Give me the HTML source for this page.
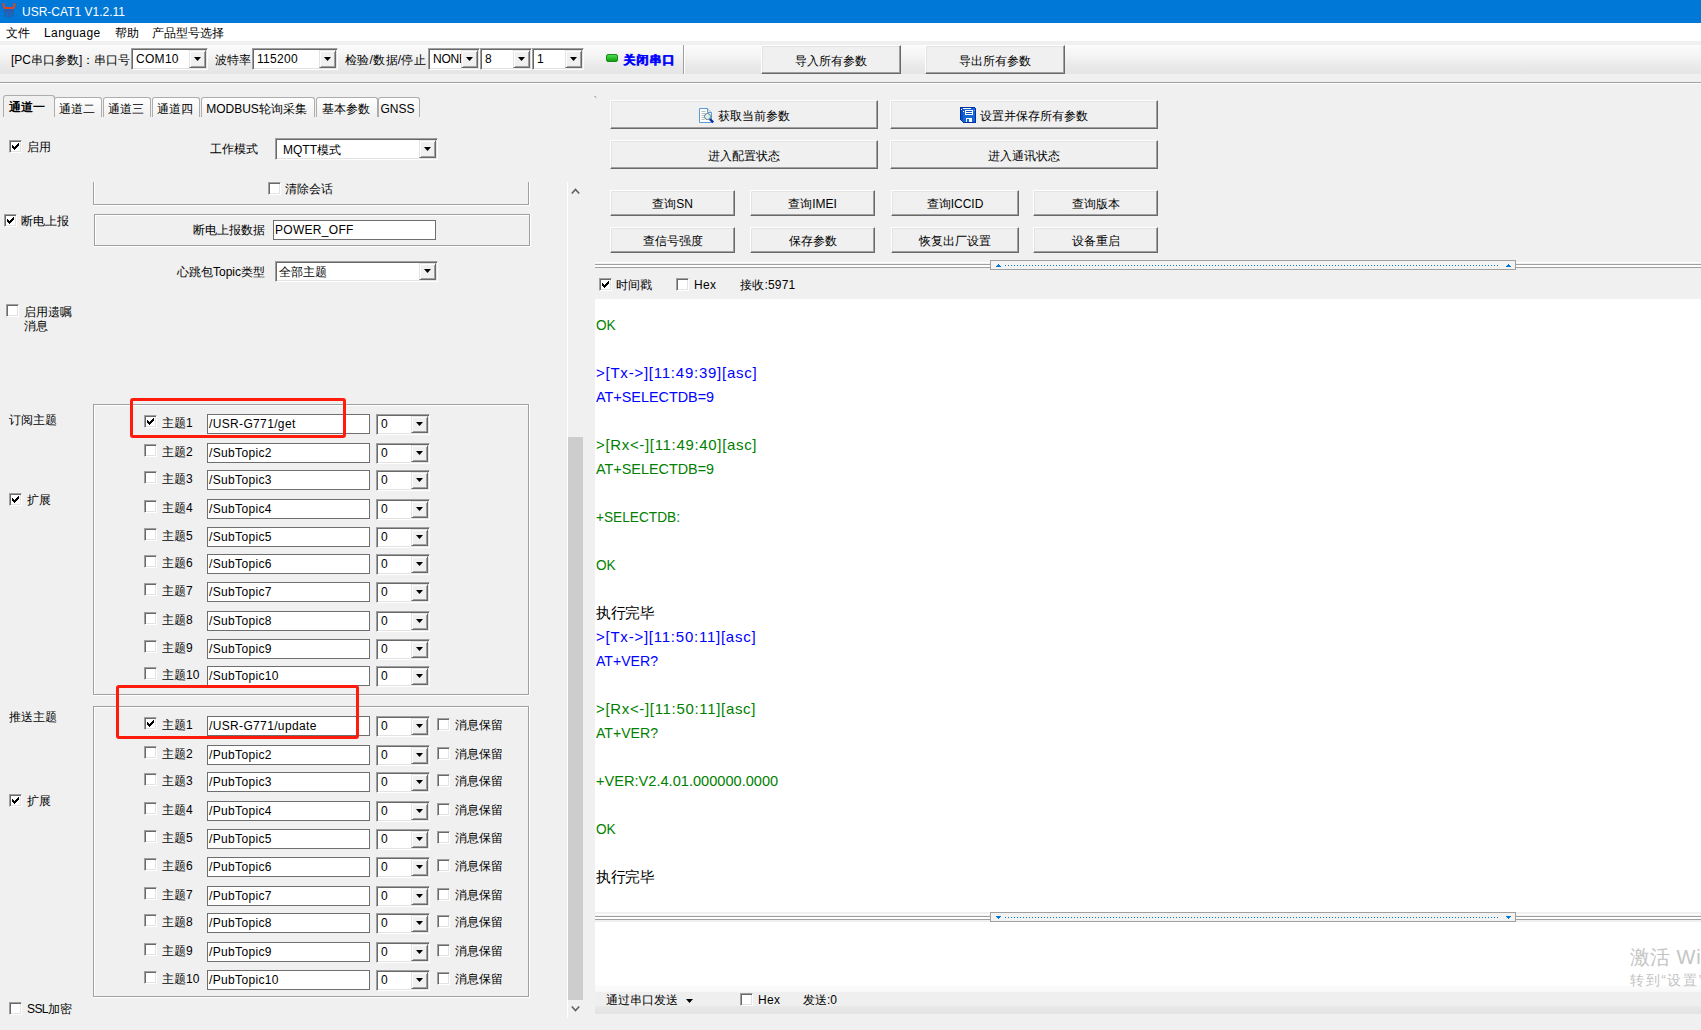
<!DOCTYPE html><html><head><meta charset="utf-8"><style>
html,body{margin:0;padding:0;width:1701px;height:1030px;overflow:hidden;background:#F0F0F0;}
body{position:relative;font-family:"Liberation Sans",sans-serif;font-size:12px;color:#000;}
.a,.t,.cb,.btn,.combo,.edit,.grp{position:absolute;box-sizing:border-box;}
.t{white-space:nowrap;}
.cb{width:13px;height:13px;background:#fff;border:1px solid;border-color:#A0A0A0 #fff #fff #A0A0A0;box-shadow:inset 1px 1px 0 #696969, inset -1px -1px 0 #E3E3E3;}
.ck{position:absolute;left:-1px;top:-1px;}
.btn{background:#F0F0F0;border:1px solid;border-color:#fff #696969 #696969 #fff;box-shadow:inset -1px -1px 0 #A0A0A0, inset 1px 1px 0 #E3E3E3;text-align:center;white-space:nowrap;}
.combo{background:#fff;border:1px solid;border-color:#A0A0A0 #fff #fff #A0A0A0;box-shadow:inset 1px 1px 0 #696969, inset -1px -1px 0 #E3E3E3;overflow:hidden;}
.combo .ct,.edit .ct{position:absolute;white-space:nowrap;}
.dd{position:absolute;right:1px;top:1px;width:17px;box-sizing:border-box;background:#F0F0F0;border:1px solid;border-color:#E3E3E3 #696969 #696969 #E3E3E3;box-shadow:inset 1px 1px 0 #fff, inset -1px -1px 0 #A0A0A0;}
.edit{background:#fff;border:1px solid #6E6E6E;overflow:hidden;}
.tab{position:absolute;box-sizing:border-box;border:1px solid #ADADAD;border-bottom:none;border-radius:3px 3px 0 0;background:linear-gradient(#FFFFFF,#F0F0F0);text-align:center;white-space:nowrap;padding-right:3px;}
.grp{border:1px solid #A0A0A0;}
</style></head><body>

<div class="a" style="left:0px;top:0px;width:1701px;height:23px;background:#0078D7"></div>
<svg class="a" style="left:0px;top:0px" width="20" height="20"><path d="M3.6 4 Q3.8 8 5 8 H13 Q14.2 8 14.4 4" stroke="#D9452A" stroke-width="2.2" fill="none" stroke-linecap="round"/><path d="M3.5 9.2 H14.5 L13.8 12.5 H4.2 Z" fill="#2E5BA8" opacity="0.9"/><rect x="4.6" y="11" width="2.2" height="6.5" rx="1" fill="#2E5BA8" opacity="0.9"/><rect x="8" y="11" width="2.2" height="6.3" rx="1" fill="#2E5BA8" opacity="0.9"/><rect x="11.3" y="11" width="2.2" height="6.5" rx="1" fill="#2E5BA8" opacity="0.9"/></svg>
<div class="t" style="left:22px;top:4.0px;line-height:16px;font-size:12px;color:#fff;">USR-CAT1 V1.2.11</div>
<div class="a" style="left:0px;top:23px;width:1701px;height:18px;background:#fff"></div>
<div class="t" style="left:6px;top:25.0px;line-height:16px;font-size:12px;color:#000;">文件</div>
<div class="t" style="left:44px;top:25.0px;line-height:16px;font-size:12px;color:#000;letter-spacing:0.4px;">Language</div>
<div class="t" style="left:115px;top:25.0px;line-height:16px;font-size:12px;color:#000;">帮助</div>
<div class="t" style="left:152px;top:25.0px;line-height:16px;font-size:12px;color:#000;">产品型号选择</div>
<div class="a" style="left:0px;top:41px;width:1701px;height:4px;background:#F0F0F0"></div>
<div class="a" style="left:0px;top:45px;width:1701px;height:29px;background:linear-gradient(#FBFBFB,#F6F6F6 30%,#E9E9E9 75%,#E5E5E5)"></div>
<div class="a" style="left:0px;top:74px;width:1701px;height:8px;background:#F0F0F0"></div>
<div class="a" style="left:0px;top:82px;width:1701px;height:1px;background:#A0A0A0"></div>
<div class="a" style="left:0px;top:83px;width:1701px;height:1px;background:#FFFFFF"></div>
<div class="t" style="left:11px;top:52.0px;line-height:16px;font-size:12px;color:#000;">[PC串口参数]：串口号</div>
<div class="combo" style="left:131px;top:48px;width:77px;height:22px"><div class="ct" style="left:4px;top:1px;line-height:18px;letter-spacing:0.3px;">COM10</div><div class="dd" style="height:18px"><svg width="7" height="4" style="position:absolute;left:4px;top:6px"><path d="M0 0h7l-3.5 4z" fill="#000"/></svg></div></div>
<div class="t" style="left:215px;top:52.0px;line-height:16px;font-size:12px;color:#000;">波特率</div>
<div class="combo" style="left:252px;top:48px;width:86px;height:22px"><div class="ct" style="left:4px;top:1px;line-height:18px;letter-spacing:0.3px;">115200</div><div class="dd" style="height:18px"><svg width="7" height="4" style="position:absolute;left:4px;top:6px"><path d="M0 0h7l-3.5 4z" fill="#000"/></svg></div></div>
<div class="t" style="left:345px;top:52.0px;line-height:16px;font-size:12px;color:#000;letter-spacing:0.3px;">检验/数据/停止</div>
<div class="combo" style="left:428px;top:48px;width:52px;height:22px"><div class="ct" style="left:4px;top:1px;line-height:18px;letter-spacing:-0.2px;">NONE</div><div class="dd" style="height:18px"><svg width="7" height="4" style="position:absolute;left:4px;top:6px"><path d="M0 0h7l-3.5 4z" fill="#000"/></svg></div></div>
<div class="combo" style="left:480px;top:48px;width:52px;height:22px"><div class="ct" style="left:4px;top:1px;line-height:18px;">8</div><div class="dd" style="height:18px"><svg width="7" height="4" style="position:absolute;left:4px;top:6px"><path d="M0 0h7l-3.5 4z" fill="#000"/></svg></div></div>
<div class="combo" style="left:532px;top:48px;width:52px;height:22px"><div class="ct" style="left:4px;top:1px;line-height:18px;">1</div><div class="dd" style="height:18px"><svg width="7" height="4" style="position:absolute;left:4px;top:6px"><path d="M0 0h7l-3.5 4z" fill="#000"/></svg></div></div>
<div class="a" style="left:606px;top:54px;width:12px;height:8px;background:linear-gradient(#4CDB4C,#10A010);border-radius:2px;border:1px solid #1A8A1A;box-sizing:border-box"></div>
<div class="t" style="left:623px;top:52.0px;line-height:16px;font-size:12px;color:#0000FF;font-weight:bold;letter-spacing:1.1px;text-shadow:0.5px 0 0 #0000FF;">关闭串口</div>
<div class="a" style="left:683px;top:45px;width:1px;height:29px;background:#A0A0A0"></div>
<div class="a" style="left:684px;top:45px;width:1px;height:29px;background:#fff"></div>
<div class="btn" style="left:761px;top:45px;width:140px;height:29px;line-height:27px;padding-top:2px">导入所有参数</div>
<div class="btn" style="left:925px;top:45px;width:140px;height:29px;line-height:27px;padding-top:2px">导出所有参数</div>
<div class="tab" style="left:54px;top:97px;width:48px;height:20px;line-height:22px">通道二</div>
<div class="tab" style="left:103px;top:97px;width:48px;height:20px;line-height:22px">通道三</div>
<div class="tab" style="left:152px;top:97px;width:48px;height:20px;line-height:22px">通道四</div>
<div class="tab" style="left:201px;top:97px;width:114px;height:20px;line-height:22px">MODBUS轮询采集</div>
<div class="tab" style="left:316px;top:97px;width:62px;height:20px;line-height:22px">基本参数</div>
<div class="tab" style="left:378px;top:97px;width:42px;height:20px;line-height:22px">GNSS</div>
<div class="tab" style="left:3px;top:95px;width:52px;height:22px;line-height:23px;background:#F0F0F0;font-weight:bold;text-indent:-2px">通道一</div>
<div class="cb" style="left:9px;top:140px"><svg width="13" height="13" class="ck"><path d="M3 5h1v3h-1zM4 6h1v3h-1zM5 7h1v3h-1zM6 6h1v3h-1zM7 5h1v3h-1zM8 4h1v3h-1zM9 3h1v3h-1z" fill="#000"/></svg></div>
<div class="t" style="left:27px;top:139.0px;line-height:16px;font-size:12px;color:#000;">启用</div>
<div class="t" style="left:210px;top:141.0px;line-height:16px;font-size:12px;color:#000;">工作模式</div>
<div class="combo" style="left:275px;top:138px;width:163px;height:22px"><div class="ct" style="left:7px;top:2px;line-height:18px;">MQTT模式</div><div class="dd" style="height:18px"><svg width="7" height="4" style="position:absolute;left:4px;top:6px"><path d="M0 0h7l-3.5 4z" fill="#000"/></svg></div></div>
<div class="grp" style="left:93px;top:182px;width:436px;height:23px;border-top:none;"></div>
<div class="a" style="left:94px;top:182px;width:1px;height:22px;background:#fff"></div>
<div class="a" style="left:93px;top:205px;width:437px;height:1px;background:#fff"></div>
<div class="a" style="left:529px;top:182px;width:1px;height:24px;background:#fff"></div>
<div class="cb" style="left:268px;top:182px"></div>
<div class="t" style="left:285px;top:181.0px;line-height:16px;font-size:12px;color:#000;">清除会话</div>
<div class="cb" style="left:4px;top:214px"><svg width="13" height="13" class="ck"><path d="M3 5h1v3h-1zM4 6h1v3h-1zM5 7h1v3h-1zM6 6h1v3h-1zM7 5h1v3h-1zM8 4h1v3h-1zM9 3h1v3h-1z" fill="#000"/></svg></div>
<div class="t" style="left:21px;top:213.0px;line-height:16px;font-size:12px;color:#000;">断电上报</div>
<div class="grp" style="left:94px;top:214px;width:436px;height:32px;"></div>
<div class="a" style="left:95px;top:215px;width:434px;height:1px;background:#fff"></div>
<div class="a" style="left:95px;top:215px;width:1px;height:30px;background:#fff"></div>
<div class="a" style="left:94px;top:246px;width:437px;height:1px;background:#fff"></div>
<div class="a" style="left:530px;top:214px;width:1px;height:33px;background:#fff"></div>
<div class="t" style="left:193px;top:222.0px;line-height:16px;font-size:12px;color:#000;">断电上报数据</div>
<div class="edit" style="left:273px;top:220px;width:163px;height:20px"><div class="ct" style="left:1px;top:0px;line-height:18px;letter-spacing:0.3px;">POWER_OFF</div></div>
<div class="t" style="left:177px;top:264.0px;line-height:16px;font-size:12px;color:#000;">心跳包Topic类型</div>
<div class="combo" style="left:275px;top:261px;width:163px;height:21px"><div class="ct" style="left:3px;top:2px;line-height:17px;">全部主题</div><div class="dd" style="height:17px"><svg width="7" height="4" style="position:absolute;left:4px;top:5px"><path d="M0 0h7l-3.5 4z" fill="#000"/></svg></div></div>
<div class="cb" style="left:6px;top:304px"></div>
<div class="t" style="left:24px;top:304.0px;line-height:16px;font-size:12px;color:#000;">启用遗嘱</div>
<div class="t" style="left:24px;top:318.0px;line-height:16px;font-size:12px;color:#000;">消息</div>
<div class="t" style="left:9px;top:412.0px;line-height:16px;font-size:12px;color:#000;">订阅主题</div>
<div class="cb" style="left:9px;top:493px"><svg width="13" height="13" class="ck"><path d="M3 5h1v3h-1zM4 6h1v3h-1zM5 7h1v3h-1zM6 6h1v3h-1zM7 5h1v3h-1zM8 4h1v3h-1zM9 3h1v3h-1z" fill="#000"/></svg></div>
<div class="t" style="left:27px;top:492.0px;line-height:16px;font-size:12px;color:#000;">扩展</div>
<div class="t" style="left:9px;top:709.0px;line-height:16px;font-size:12px;color:#000;">推送主题</div>
<div class="cb" style="left:9px;top:794px"><svg width="13" height="13" class="ck"><path d="M3 5h1v3h-1zM4 6h1v3h-1zM5 7h1v3h-1zM6 6h1v3h-1zM7 5h1v3h-1zM8 4h1v3h-1zM9 3h1v3h-1z" fill="#000"/></svg></div>
<div class="t" style="left:27px;top:793.0px;line-height:16px;font-size:12px;color:#000;">扩展</div>
<div class="cb" style="left:9px;top:1002px"></div>
<div class="t" style="left:27px;top:1001.0px;line-height:16px;font-size:12px;color:#000;"><span style="letter-spacing:-0.6px">SSL</span>加密</div>
<div class="grp" style="left:93px;top:404px;width:436px;height:291px;"></div>
<div class="a" style="left:94px;top:405px;width:434px;height:1px;background:#fff"></div>
<div class="a" style="left:94px;top:405px;width:1px;height:289px;background:#fff"></div>
<div class="a" style="left:93px;top:695px;width:437px;height:1px;background:#fff"></div>
<div class="a" style="left:529px;top:404px;width:1px;height:292px;background:#fff"></div>
<div class="grp" style="left:93px;top:706px;width:436px;height:291px;"></div>
<div class="a" style="left:94px;top:707px;width:434px;height:1px;background:#fff"></div>
<div class="a" style="left:94px;top:707px;width:1px;height:289px;background:#fff"></div>
<div class="a" style="left:93px;top:997px;width:437px;height:1px;background:#fff"></div>
<div class="a" style="left:529px;top:706px;width:1px;height:292px;background:#fff"></div>
<div class="cb" style="left:144px;top:415px"><svg width="13" height="13" class="ck"><path d="M3 5h1v3h-1zM4 6h1v3h-1zM5 7h1v3h-1zM6 6h1v3h-1zM7 5h1v3h-1zM8 4h1v3h-1zM9 3h1v3h-1z" fill="#000"/></svg></div>
<div class="t" style="left:162px;top:415.0px;line-height:16px;font-size:12px;color:#000;">主题1</div>
<div class="edit" style="left:207px;top:414px;width:163px;height:20px"><div class="ct" style="left:1px;top:0px;line-height:18px;letter-spacing:0.35px;">/USR-G771/get</div></div>
<div class="combo" style="left:376px;top:414px;width:54px;height:21px"><div class="ct" style="left:4px;top:1px;line-height:17px;">0</div><div class="dd" style="height:17px"><svg width="7" height="4" style="position:absolute;left:4px;top:5px"><path d="M0 0h7l-3.5 4z" fill="#000"/></svg></div></div>
<div class="cb" style="left:144px;top:444px"></div>
<div class="t" style="left:162px;top:444.0px;line-height:16px;font-size:12px;color:#000;">主题2</div>
<div class="edit" style="left:207px;top:443px;width:163px;height:20px"><div class="ct" style="left:1px;top:0px;line-height:18px;letter-spacing:0.35px;">/SubTopic2</div></div>
<div class="combo" style="left:376px;top:443px;width:54px;height:21px"><div class="ct" style="left:4px;top:1px;line-height:17px;">0</div><div class="dd" style="height:17px"><svg width="7" height="4" style="position:absolute;left:4px;top:5px"><path d="M0 0h7l-3.5 4z" fill="#000"/></svg></div></div>
<div class="cb" style="left:144px;top:471px"></div>
<div class="t" style="left:162px;top:471.0px;line-height:16px;font-size:12px;color:#000;">主题3</div>
<div class="edit" style="left:207px;top:470px;width:163px;height:20px"><div class="ct" style="left:1px;top:0px;line-height:18px;letter-spacing:0.35px;">/SubTopic3</div></div>
<div class="combo" style="left:376px;top:470px;width:54px;height:21px"><div class="ct" style="left:4px;top:1px;line-height:17px;">0</div><div class="dd" style="height:17px"><svg width="7" height="4" style="position:absolute;left:4px;top:5px"><path d="M0 0h7l-3.5 4z" fill="#000"/></svg></div></div>
<div class="cb" style="left:144px;top:500px"></div>
<div class="t" style="left:162px;top:500.0px;line-height:16px;font-size:12px;color:#000;">主题4</div>
<div class="edit" style="left:207px;top:499px;width:163px;height:20px"><div class="ct" style="left:1px;top:0px;line-height:18px;letter-spacing:0.35px;">/SubTopic4</div></div>
<div class="combo" style="left:376px;top:499px;width:54px;height:21px"><div class="ct" style="left:4px;top:1px;line-height:17px;">0</div><div class="dd" style="height:17px"><svg width="7" height="4" style="position:absolute;left:4px;top:5px"><path d="M0 0h7l-3.5 4z" fill="#000"/></svg></div></div>
<div class="cb" style="left:144px;top:528px"></div>
<div class="t" style="left:162px;top:528.0px;line-height:16px;font-size:12px;color:#000;">主题5</div>
<div class="edit" style="left:207px;top:527px;width:163px;height:20px"><div class="ct" style="left:1px;top:0px;line-height:18px;letter-spacing:0.35px;">/SubTopic5</div></div>
<div class="combo" style="left:376px;top:527px;width:54px;height:21px"><div class="ct" style="left:4px;top:1px;line-height:17px;">0</div><div class="dd" style="height:17px"><svg width="7" height="4" style="position:absolute;left:4px;top:5px"><path d="M0 0h7l-3.5 4z" fill="#000"/></svg></div></div>
<div class="cb" style="left:144px;top:555px"></div>
<div class="t" style="left:162px;top:555.0px;line-height:16px;font-size:12px;color:#000;">主题6</div>
<div class="edit" style="left:207px;top:554px;width:163px;height:20px"><div class="ct" style="left:1px;top:0px;line-height:18px;letter-spacing:0.35px;">/SubTopic6</div></div>
<div class="combo" style="left:376px;top:554px;width:54px;height:21px"><div class="ct" style="left:4px;top:1px;line-height:17px;">0</div><div class="dd" style="height:17px"><svg width="7" height="4" style="position:absolute;left:4px;top:5px"><path d="M0 0h7l-3.5 4z" fill="#000"/></svg></div></div>
<div class="cb" style="left:144px;top:583px"></div>
<div class="t" style="left:162px;top:583.0px;line-height:16px;font-size:12px;color:#000;">主题7</div>
<div class="edit" style="left:207px;top:582px;width:163px;height:20px"><div class="ct" style="left:1px;top:0px;line-height:18px;letter-spacing:0.35px;">/SubTopic7</div></div>
<div class="combo" style="left:376px;top:582px;width:54px;height:21px"><div class="ct" style="left:4px;top:1px;line-height:17px;">0</div><div class="dd" style="height:17px"><svg width="7" height="4" style="position:absolute;left:4px;top:5px"><path d="M0 0h7l-3.5 4z" fill="#000"/></svg></div></div>
<div class="cb" style="left:144px;top:612px"></div>
<div class="t" style="left:162px;top:612.0px;line-height:16px;font-size:12px;color:#000;">主题8</div>
<div class="edit" style="left:207px;top:611px;width:163px;height:20px"><div class="ct" style="left:1px;top:0px;line-height:18px;letter-spacing:0.35px;">/SubTopic8</div></div>
<div class="combo" style="left:376px;top:611px;width:54px;height:21px"><div class="ct" style="left:4px;top:1px;line-height:17px;">0</div><div class="dd" style="height:17px"><svg width="7" height="4" style="position:absolute;left:4px;top:5px"><path d="M0 0h7l-3.5 4z" fill="#000"/></svg></div></div>
<div class="cb" style="left:144px;top:640px"></div>
<div class="t" style="left:162px;top:640.0px;line-height:16px;font-size:12px;color:#000;">主题9</div>
<div class="edit" style="left:207px;top:639px;width:163px;height:20px"><div class="ct" style="left:1px;top:0px;line-height:18px;letter-spacing:0.35px;">/SubTopic9</div></div>
<div class="combo" style="left:376px;top:639px;width:54px;height:21px"><div class="ct" style="left:4px;top:1px;line-height:17px;">0</div><div class="dd" style="height:17px"><svg width="7" height="4" style="position:absolute;left:4px;top:5px"><path d="M0 0h7l-3.5 4z" fill="#000"/></svg></div></div>
<div class="cb" style="left:144px;top:667px"></div>
<div class="t" style="left:162px;top:667.0px;line-height:16px;font-size:12px;color:#000;">主题10</div>
<div class="edit" style="left:207px;top:666px;width:163px;height:20px"><div class="ct" style="left:1px;top:0px;line-height:18px;letter-spacing:0.35px;">/SubTopic10</div></div>
<div class="combo" style="left:376px;top:666px;width:54px;height:21px"><div class="ct" style="left:4px;top:1px;line-height:17px;">0</div><div class="dd" style="height:17px"><svg width="7" height="4" style="position:absolute;left:4px;top:5px"><path d="M0 0h7l-3.5 4z" fill="#000"/></svg></div></div>
<div class="cb" style="left:144px;top:717px"><svg width="13" height="13" class="ck"><path d="M3 5h1v3h-1zM4 6h1v3h-1zM5 7h1v3h-1zM6 6h1v3h-1zM7 5h1v3h-1zM8 4h1v3h-1zM9 3h1v3h-1z" fill="#000"/></svg></div>
<div class="t" style="left:162px;top:717.0px;line-height:16px;font-size:12px;color:#000;">主题1</div>
<div class="edit" style="left:207px;top:716px;width:163px;height:20px"><div class="ct" style="left:1px;top:0px;line-height:18px;letter-spacing:0.35px;">/USR-G771/update</div></div>
<div class="combo" style="left:376px;top:716px;width:54px;height:21px"><div class="ct" style="left:4px;top:1px;line-height:17px;">0</div><div class="dd" style="height:17px"><svg width="7" height="4" style="position:absolute;left:4px;top:5px"><path d="M0 0h7l-3.5 4z" fill="#000"/></svg></div></div>
<div class="cb" style="left:437px;top:718px"></div>
<div class="t" style="left:455px;top:717.0px;line-height:16px;font-size:12px;color:#000;">消息保留</div>
<div class="cb" style="left:144px;top:746px"></div>
<div class="t" style="left:162px;top:746.0px;line-height:16px;font-size:12px;color:#000;">主题2</div>
<div class="edit" style="left:207px;top:745px;width:163px;height:20px"><div class="ct" style="left:1px;top:0px;line-height:18px;letter-spacing:0.35px;">/PubTopic2</div></div>
<div class="combo" style="left:376px;top:745px;width:54px;height:21px"><div class="ct" style="left:4px;top:1px;line-height:17px;">0</div><div class="dd" style="height:17px"><svg width="7" height="4" style="position:absolute;left:4px;top:5px"><path d="M0 0h7l-3.5 4z" fill="#000"/></svg></div></div>
<div class="cb" style="left:437px;top:747px"></div>
<div class="t" style="left:455px;top:746.0px;line-height:16px;font-size:12px;color:#000;">消息保留</div>
<div class="cb" style="left:144px;top:773px"></div>
<div class="t" style="left:162px;top:773.0px;line-height:16px;font-size:12px;color:#000;">主题3</div>
<div class="edit" style="left:207px;top:772px;width:163px;height:20px"><div class="ct" style="left:1px;top:0px;line-height:18px;letter-spacing:0.35px;">/PubTopic3</div></div>
<div class="combo" style="left:376px;top:772px;width:54px;height:21px"><div class="ct" style="left:4px;top:1px;line-height:17px;">0</div><div class="dd" style="height:17px"><svg width="7" height="4" style="position:absolute;left:4px;top:5px"><path d="M0 0h7l-3.5 4z" fill="#000"/></svg></div></div>
<div class="cb" style="left:437px;top:774px"></div>
<div class="t" style="left:455px;top:773.0px;line-height:16px;font-size:12px;color:#000;">消息保留</div>
<div class="cb" style="left:144px;top:802px"></div>
<div class="t" style="left:162px;top:802.0px;line-height:16px;font-size:12px;color:#000;">主题4</div>
<div class="edit" style="left:207px;top:801px;width:163px;height:20px"><div class="ct" style="left:1px;top:0px;line-height:18px;letter-spacing:0.35px;">/PubTopic4</div></div>
<div class="combo" style="left:376px;top:801px;width:54px;height:21px"><div class="ct" style="left:4px;top:1px;line-height:17px;">0</div><div class="dd" style="height:17px"><svg width="7" height="4" style="position:absolute;left:4px;top:5px"><path d="M0 0h7l-3.5 4z" fill="#000"/></svg></div></div>
<div class="cb" style="left:437px;top:803px"></div>
<div class="t" style="left:455px;top:802.0px;line-height:16px;font-size:12px;color:#000;">消息保留</div>
<div class="cb" style="left:144px;top:830px"></div>
<div class="t" style="left:162px;top:830.0px;line-height:16px;font-size:12px;color:#000;">主题5</div>
<div class="edit" style="left:207px;top:829px;width:163px;height:20px"><div class="ct" style="left:1px;top:0px;line-height:18px;letter-spacing:0.35px;">/PubTopic5</div></div>
<div class="combo" style="left:376px;top:829px;width:54px;height:21px"><div class="ct" style="left:4px;top:1px;line-height:17px;">0</div><div class="dd" style="height:17px"><svg width="7" height="4" style="position:absolute;left:4px;top:5px"><path d="M0 0h7l-3.5 4z" fill="#000"/></svg></div></div>
<div class="cb" style="left:437px;top:831px"></div>
<div class="t" style="left:455px;top:830.0px;line-height:16px;font-size:12px;color:#000;">消息保留</div>
<div class="cb" style="left:144px;top:858px"></div>
<div class="t" style="left:162px;top:858.0px;line-height:16px;font-size:12px;color:#000;">主题6</div>
<div class="edit" style="left:207px;top:857px;width:163px;height:20px"><div class="ct" style="left:1px;top:0px;line-height:18px;letter-spacing:0.35px;">/PubTopic6</div></div>
<div class="combo" style="left:376px;top:857px;width:54px;height:21px"><div class="ct" style="left:4px;top:1px;line-height:17px;">0</div><div class="dd" style="height:17px"><svg width="7" height="4" style="position:absolute;left:4px;top:5px"><path d="M0 0h7l-3.5 4z" fill="#000"/></svg></div></div>
<div class="cb" style="left:437px;top:859px"></div>
<div class="t" style="left:455px;top:858.0px;line-height:16px;font-size:12px;color:#000;">消息保留</div>
<div class="cb" style="left:144px;top:887px"></div>
<div class="t" style="left:162px;top:887.0px;line-height:16px;font-size:12px;color:#000;">主题7</div>
<div class="edit" style="left:207px;top:886px;width:163px;height:20px"><div class="ct" style="left:1px;top:0px;line-height:18px;letter-spacing:0.35px;">/PubTopic7</div></div>
<div class="combo" style="left:376px;top:886px;width:54px;height:21px"><div class="ct" style="left:4px;top:1px;line-height:17px;">0</div><div class="dd" style="height:17px"><svg width="7" height="4" style="position:absolute;left:4px;top:5px"><path d="M0 0h7l-3.5 4z" fill="#000"/></svg></div></div>
<div class="cb" style="left:437px;top:888px"></div>
<div class="t" style="left:455px;top:887.0px;line-height:16px;font-size:12px;color:#000;">消息保留</div>
<div class="cb" style="left:144px;top:914px"></div>
<div class="t" style="left:162px;top:914.0px;line-height:16px;font-size:12px;color:#000;">主题8</div>
<div class="edit" style="left:207px;top:913px;width:163px;height:20px"><div class="ct" style="left:1px;top:0px;line-height:18px;letter-spacing:0.35px;">/PubTopic8</div></div>
<div class="combo" style="left:376px;top:913px;width:54px;height:21px"><div class="ct" style="left:4px;top:1px;line-height:17px;">0</div><div class="dd" style="height:17px"><svg width="7" height="4" style="position:absolute;left:4px;top:5px"><path d="M0 0h7l-3.5 4z" fill="#000"/></svg></div></div>
<div class="cb" style="left:437px;top:915px"></div>
<div class="t" style="left:455px;top:914.0px;line-height:16px;font-size:12px;color:#000;">消息保留</div>
<div class="cb" style="left:144px;top:943px"></div>
<div class="t" style="left:162px;top:943.0px;line-height:16px;font-size:12px;color:#000;">主题9</div>
<div class="edit" style="left:207px;top:942px;width:163px;height:20px"><div class="ct" style="left:1px;top:0px;line-height:18px;letter-spacing:0.35px;">/PubTopic9</div></div>
<div class="combo" style="left:376px;top:942px;width:54px;height:21px"><div class="ct" style="left:4px;top:1px;line-height:17px;">0</div><div class="dd" style="height:17px"><svg width="7" height="4" style="position:absolute;left:4px;top:5px"><path d="M0 0h7l-3.5 4z" fill="#000"/></svg></div></div>
<div class="cb" style="left:437px;top:944px"></div>
<div class="t" style="left:455px;top:943.0px;line-height:16px;font-size:12px;color:#000;">消息保留</div>
<div class="cb" style="left:144px;top:971px"></div>
<div class="t" style="left:162px;top:971.0px;line-height:16px;font-size:12px;color:#000;">主题10</div>
<div class="edit" style="left:207px;top:970px;width:163px;height:20px"><div class="ct" style="left:1px;top:0px;line-height:18px;letter-spacing:0.35px;">/PubTopic10</div></div>
<div class="combo" style="left:376px;top:970px;width:54px;height:21px"><div class="ct" style="left:4px;top:1px;line-height:17px;">0</div><div class="dd" style="height:17px"><svg width="7" height="4" style="position:absolute;left:4px;top:5px"><path d="M0 0h7l-3.5 4z" fill="#000"/></svg></div></div>
<div class="cb" style="left:437px;top:972px"></div>
<div class="t" style="left:455px;top:971.0px;line-height:16px;font-size:12px;color:#000;">消息保留</div>
<div class="a" style="left:130px;top:398px;width:216px;height:40px;border:3px solid #FF1C0C;border-radius:3px"></div>
<div class="a" style="left:116px;top:685px;width:243px;height:54px;border:3px solid #FF1C0C;border-radius:3px"></div>
<div class="a" style="left:567px;top:182px;width:1px;height:836px;background:#fff"></div>
<div class="a" style="left:568px;top:437px;width:15px;height:563px;background:#CDCDCD"></div>
<svg class="a" style="left:571px;top:187px" width="9" height="8"><path d="M0.8 6.5 L4.5 2.5 L8.2 6.5" stroke="#606060" stroke-width="1.6" fill="none"/></svg>
<svg class="a" style="left:571px;top:1005px" width="9" height="8"><path d="M0.8 1.5 L4.5 5.5 L8.2 1.5" stroke="#606060" stroke-width="1.6" fill="none"/></svg>
<div class="a" style="left:594px;top:96px;width:2px;height:1px;background:#B8B8B8"></div>
<div class="a" style="left:595px;top:97px;width:2px;height:1px;background:#C8C8C8"></div>
<div class="btn" style="left:610px;top:100px;width:268px;height:29px;line-height:27px;padding-top:2px"><span style="padding-left:20px">获取当前参数</span></div>
<div class="btn" style="left:890px;top:100px;width:268px;height:29px;line-height:27px;padding-top:2px"><span style="padding-left:20px">设置并保存所有参数</span></div>
<svg class="a" style="left:699px;top:107px" width="16" height="17"><path d="M0.5 1.5 H8.5 L12.5 5.5 V15.5 H0.5 Z" fill="#fff" stroke="#5B9BD5" stroke-width="1"/><path d="M8.5 1.5 V5.5 H12.5" fill="#DDEBF7" stroke="#5B9BD5" stroke-width="1"/><path d="M2.5 4.5h4M2.5 6.5h4M2.5 8.5h3M2.5 10.5h3M2.5 12.5h3" stroke="#BBBBBB" stroke-width="1"/><circle cx="8.5" cy="9.5" r="3" fill="#CFF6F8" stroke="#707070" stroke-width="1"/><path d="M10.8 12 L14.2 15.3" stroke="#0A2FA8" stroke-width="2.4"/></svg>
<svg class="a" style="left:960px;top:107px" width="17" height="17" shape-rendering="crispEdges"><path d="M0 0H14L16 2V16H3L0 13Z" fill="#0030A8"/><path d="M1 1H14L15 2V15H3.5L1 12.5Z" fill="#1266D6"/><rect x="1" y="2" width="2" height="11" fill="#0A4FC0"/><rect x="3" y="1" width="8" height="1" fill="#fff"/><rect x="1" y="2" width="1" height="1" fill="#fff"/><rect x="3" y="4" width="1" height="1" fill="#fff"/><rect x="14" y="3" width="1" height="1" fill="#7FB0F0"/><rect x="5" y="3" width="8" height="5" fill="#fff"/><rect x="6" y="4" width="6" height="1" fill="#0A50C0"/><rect x="6" y="6" width="6" height="1" fill="#0A50C0"/><rect x="6" y="11" width="6" height="4" fill="#fff"/><rect x="7" y="12" width="2" height="3" fill="#1266D6"/></svg>
<div class="btn" style="left:610px;top:140px;width:268px;height:29px;line-height:27px;padding-top:2px">进入配置状态</div>
<div class="btn" style="left:890px;top:140px;width:268px;height:29px;line-height:27px;padding-top:2px">进入通讯状态</div>
<div class="btn" style="left:610px;top:190px;width:125px;height:26px;line-height:24px;padding-top:1px">查询SN</div>
<div class="btn" style="left:610px;top:227px;width:125px;height:26px;line-height:24px;padding-top:1px">查信号强度</div>
<div class="btn" style="left:750px;top:190px;width:125px;height:26px;line-height:24px;padding-top:1px">查询IMEI</div>
<div class="btn" style="left:750px;top:227px;width:125px;height:26px;line-height:24px;padding-top:1px">保存参数</div>
<div class="btn" style="left:891px;top:190px;width:128px;height:26px;line-height:24px;padding-top:1px">查询ICCID</div>
<div class="btn" style="left:891px;top:227px;width:128px;height:26px;line-height:24px;padding-top:1px">恢复出厂设置</div>
<div class="btn" style="left:1033px;top:190px;width:125px;height:26px;line-height:24px;padding-top:1px">查询版本</div>
<div class="btn" style="left:1033px;top:227px;width:125px;height:26px;line-height:24px;padding-top:1px">设备重启</div>
<div class="a" style="left:595px;top:262px;width:395px;height:1px;background:#fff"></div>
<div class="a" style="left:595px;top:264px;width:395px;height:1px;background:#A0A0A0"></div>
<div class="a" style="left:595px;top:265px;width:395px;height:2px;background:#fff"></div>
<div class="a" style="left:595px;top:267px;width:395px;height:1px;background:#A0A0A0"></div>
<div class="a" style="left:1516px;top:262px;width:185px;height:1px;background:#fff"></div>
<div class="a" style="left:1516px;top:264px;width:185px;height:1px;background:#A0A0A0"></div>
<div class="a" style="left:1516px;top:265px;width:185px;height:2px;background:#fff"></div>
<div class="a" style="left:1516px;top:267px;width:185px;height:1px;background:#A0A0A0"></div>
<div class="a" style="left:990px;top:260px;width:526px;height:10px;border:1px solid #A0A0A0;background:#F3F3F3"></div>
<svg class="a" style="left:996px;top:264px" width="5" height="3"><path d="M2 0h1v1h-1zM1 1h3v1h-3zM0 2h5v1h-5z" fill="#0078D7"/></svg>
<svg class="a" style="left:1506px;top:264px" width="5" height="3"><path d="M2 0h1v1h-1zM1 1h3v1h-3zM0 2h5v1h-5z" fill="#0078D7"/></svg>
<div class="a" style="left:1005px;top:265px;width:493px;height:1px;background-image:linear-gradient(90deg,#0078D7 1px,transparent 1px);background-size:3px 1px"></div>
<div class="cb" style="left:599px;top:278px"><svg width="13" height="13" class="ck"><path d="M3 5h1v3h-1zM4 6h1v3h-1zM5 7h1v3h-1zM6 6h1v3h-1zM7 5h1v3h-1zM8 4h1v3h-1zM9 3h1v3h-1z" fill="#000"/></svg></div>
<div class="t" style="left:616px;top:277.0px;line-height:16px;font-size:12px;color:#000;">时间戳</div>
<div class="cb" style="left:676px;top:278px"></div>
<div class="t" style="left:694px;top:277.0px;line-height:16px;font-size:12px;color:#000;letter-spacing:0.3px;">Hex</div>
<div class="t" style="left:740px;top:277.0px;line-height:16px;font-size:12px;color:#000;letter-spacing:0.2px;">接收:5971</div>
<div class="a" style="left:595px;top:299px;width:1106px;height:613px;background:#fff"></div>
<div class="t" style="left:596px;top:315.0px;line-height:20px;font-size:15px;color:#008000;transform:scaleX(0.909);transform-origin:0 0;">OK</div>
<div class="t" style="left:596px;top:363.0px;line-height:20px;font-size:15px;color:#0000FF;letter-spacing:0.76px;">&gt;[Tx-&gt;][11:49:39][asc]</div>
<div class="t" style="left:596px;top:387.0px;line-height:20px;font-size:15px;color:#0000FF;transform:scaleX(0.959);transform-origin:0 0;">AT+SELECTDB=9</div>
<div class="t" style="left:596px;top:435.0px;line-height:20px;font-size:15px;color:#008000;letter-spacing:0.67px;">&gt;[Rx&lt;-][11:49:40][asc]</div>
<div class="t" style="left:596px;top:459.0px;line-height:20px;font-size:15px;color:#008000;transform:scaleX(0.959);transform-origin:0 0;">AT+SELECTDB=9</div>
<div class="t" style="left:596px;top:507.0px;line-height:20px;font-size:15px;color:#008000;transform:scaleX(0.912);transform-origin:0 0;">+SELECTDB:</div>
<div class="t" style="left:596px;top:555.0px;line-height:20px;font-size:15px;color:#008000;transform:scaleX(0.909);transform-origin:0 0;">OK</div>
<div class="t" style="left:596px;top:603.0px;line-height:20px;font-size:15px;color:#000;transform:scaleX(0.983);transform-origin:0 0;">执行完毕</div>
<div class="t" style="left:596px;top:627.0px;line-height:20px;font-size:15px;color:#0000FF;letter-spacing:0.76px;">&gt;[Tx-&gt;][11:50:11][asc]</div>
<div class="t" style="left:596px;top:651.0px;line-height:20px;font-size:15px;color:#0000FF;transform:scaleX(0.939);transform-origin:0 0;">AT+VER?</div>
<div class="t" style="left:596px;top:699.0px;line-height:20px;font-size:15px;color:#008000;letter-spacing:0.67px;">&gt;[Rx&lt;-][11:50:11][asc]</div>
<div class="t" style="left:596px;top:723.0px;line-height:20px;font-size:15px;color:#008000;transform:scaleX(0.939);transform-origin:0 0;">AT+VER?</div>
<div class="t" style="left:596px;top:771.0px;line-height:20px;font-size:15px;color:#008000;transform:scaleX(0.973);transform-origin:0 0;">+VER:V2.4.01.000000.0000</div>
<div class="t" style="left:596px;top:819.0px;line-height:20px;font-size:15px;color:#008000;transform:scaleX(0.909);transform-origin:0 0;">OK</div>
<div class="t" style="left:596px;top:867.0px;line-height:20px;font-size:15px;color:#000;transform:scaleX(0.983);transform-origin:0 0;">执行完毕</div>
<div class="a" style="left:595px;top:914px;width:395px;height:1px;background:#fff"></div>
<div class="a" style="left:595px;top:916px;width:395px;height:1px;background:#A0A0A0"></div>
<div class="a" style="left:595px;top:917px;width:395px;height:2px;background:#fff"></div>
<div class="a" style="left:595px;top:919px;width:395px;height:1px;background:#A0A0A0"></div>
<div class="a" style="left:1516px;top:914px;width:185px;height:1px;background:#fff"></div>
<div class="a" style="left:1516px;top:916px;width:185px;height:1px;background:#A0A0A0"></div>
<div class="a" style="left:1516px;top:917px;width:185px;height:2px;background:#fff"></div>
<div class="a" style="left:1516px;top:919px;width:185px;height:1px;background:#A0A0A0"></div>
<div class="a" style="left:990px;top:912px;width:526px;height:10px;border:1px solid #A0A0A0;background:#F3F3F3"></div>
<svg class="a" style="left:996px;top:916px" width="5" height="3"><path d="M0 0h5v1h-5zM1 1h3v1h-3zM2 2h1v1h-1z" fill="#0078D7"/></svg>
<svg class="a" style="left:1506px;top:916px" width="5" height="3"><path d="M0 0h5v1h-5zM1 1h3v1h-3zM2 2h1v1h-1z" fill="#0078D7"/></svg>
<div class="a" style="left:1005px;top:917px;width:493px;height:1px;background-image:linear-gradient(90deg,#0078D7 1px,transparent 1px);background-size:3px 1px"></div>
<div class="a" style="left:595px;top:922px;width:1106px;height:63px;background:#fff"></div>
<div class="a" style="left:595px;top:985px;width:1106px;height:29px;background:linear-gradient(#FCFCFC 0,#F7F7F7 24%,#EFEFEF 26%,#EFEFEF 72%,#E8E8E8 74%,#E3E3E3 100%)"></div>
<div class="t" style="left:1630px;top:945.0px;line-height:24px;font-size:20px;color:#C4C4C4;">激活 <span style="letter-spacing:0.8px;margin-left:1px">Windows</span></div>
<div class="t" style="left:1630px;top:971.0px;line-height:18px;font-size:14px;color:#C4C4C4;letter-spacing:1.6px;">转到“设置”以激活Windows。</div>
<div class="t" style="left:606px;top:992.0px;line-height:16px;font-size:12px;color:#000;">通过串口发送</div>
<svg class="a" style="left:686px;top:999px" width="7" height="4"><path d="M0 0h7l-3.5 4z" fill="#000"/></svg>
<div class="cb" style="left:740px;top:993px"></div>
<div class="t" style="left:758px;top:992.0px;line-height:16px;font-size:12px;color:#000;letter-spacing:0.3px;">Hex</div>
<div class="t" style="left:803px;top:992.0px;line-height:16px;font-size:12px;color:#000;">发送:0</div>
</body></html>
